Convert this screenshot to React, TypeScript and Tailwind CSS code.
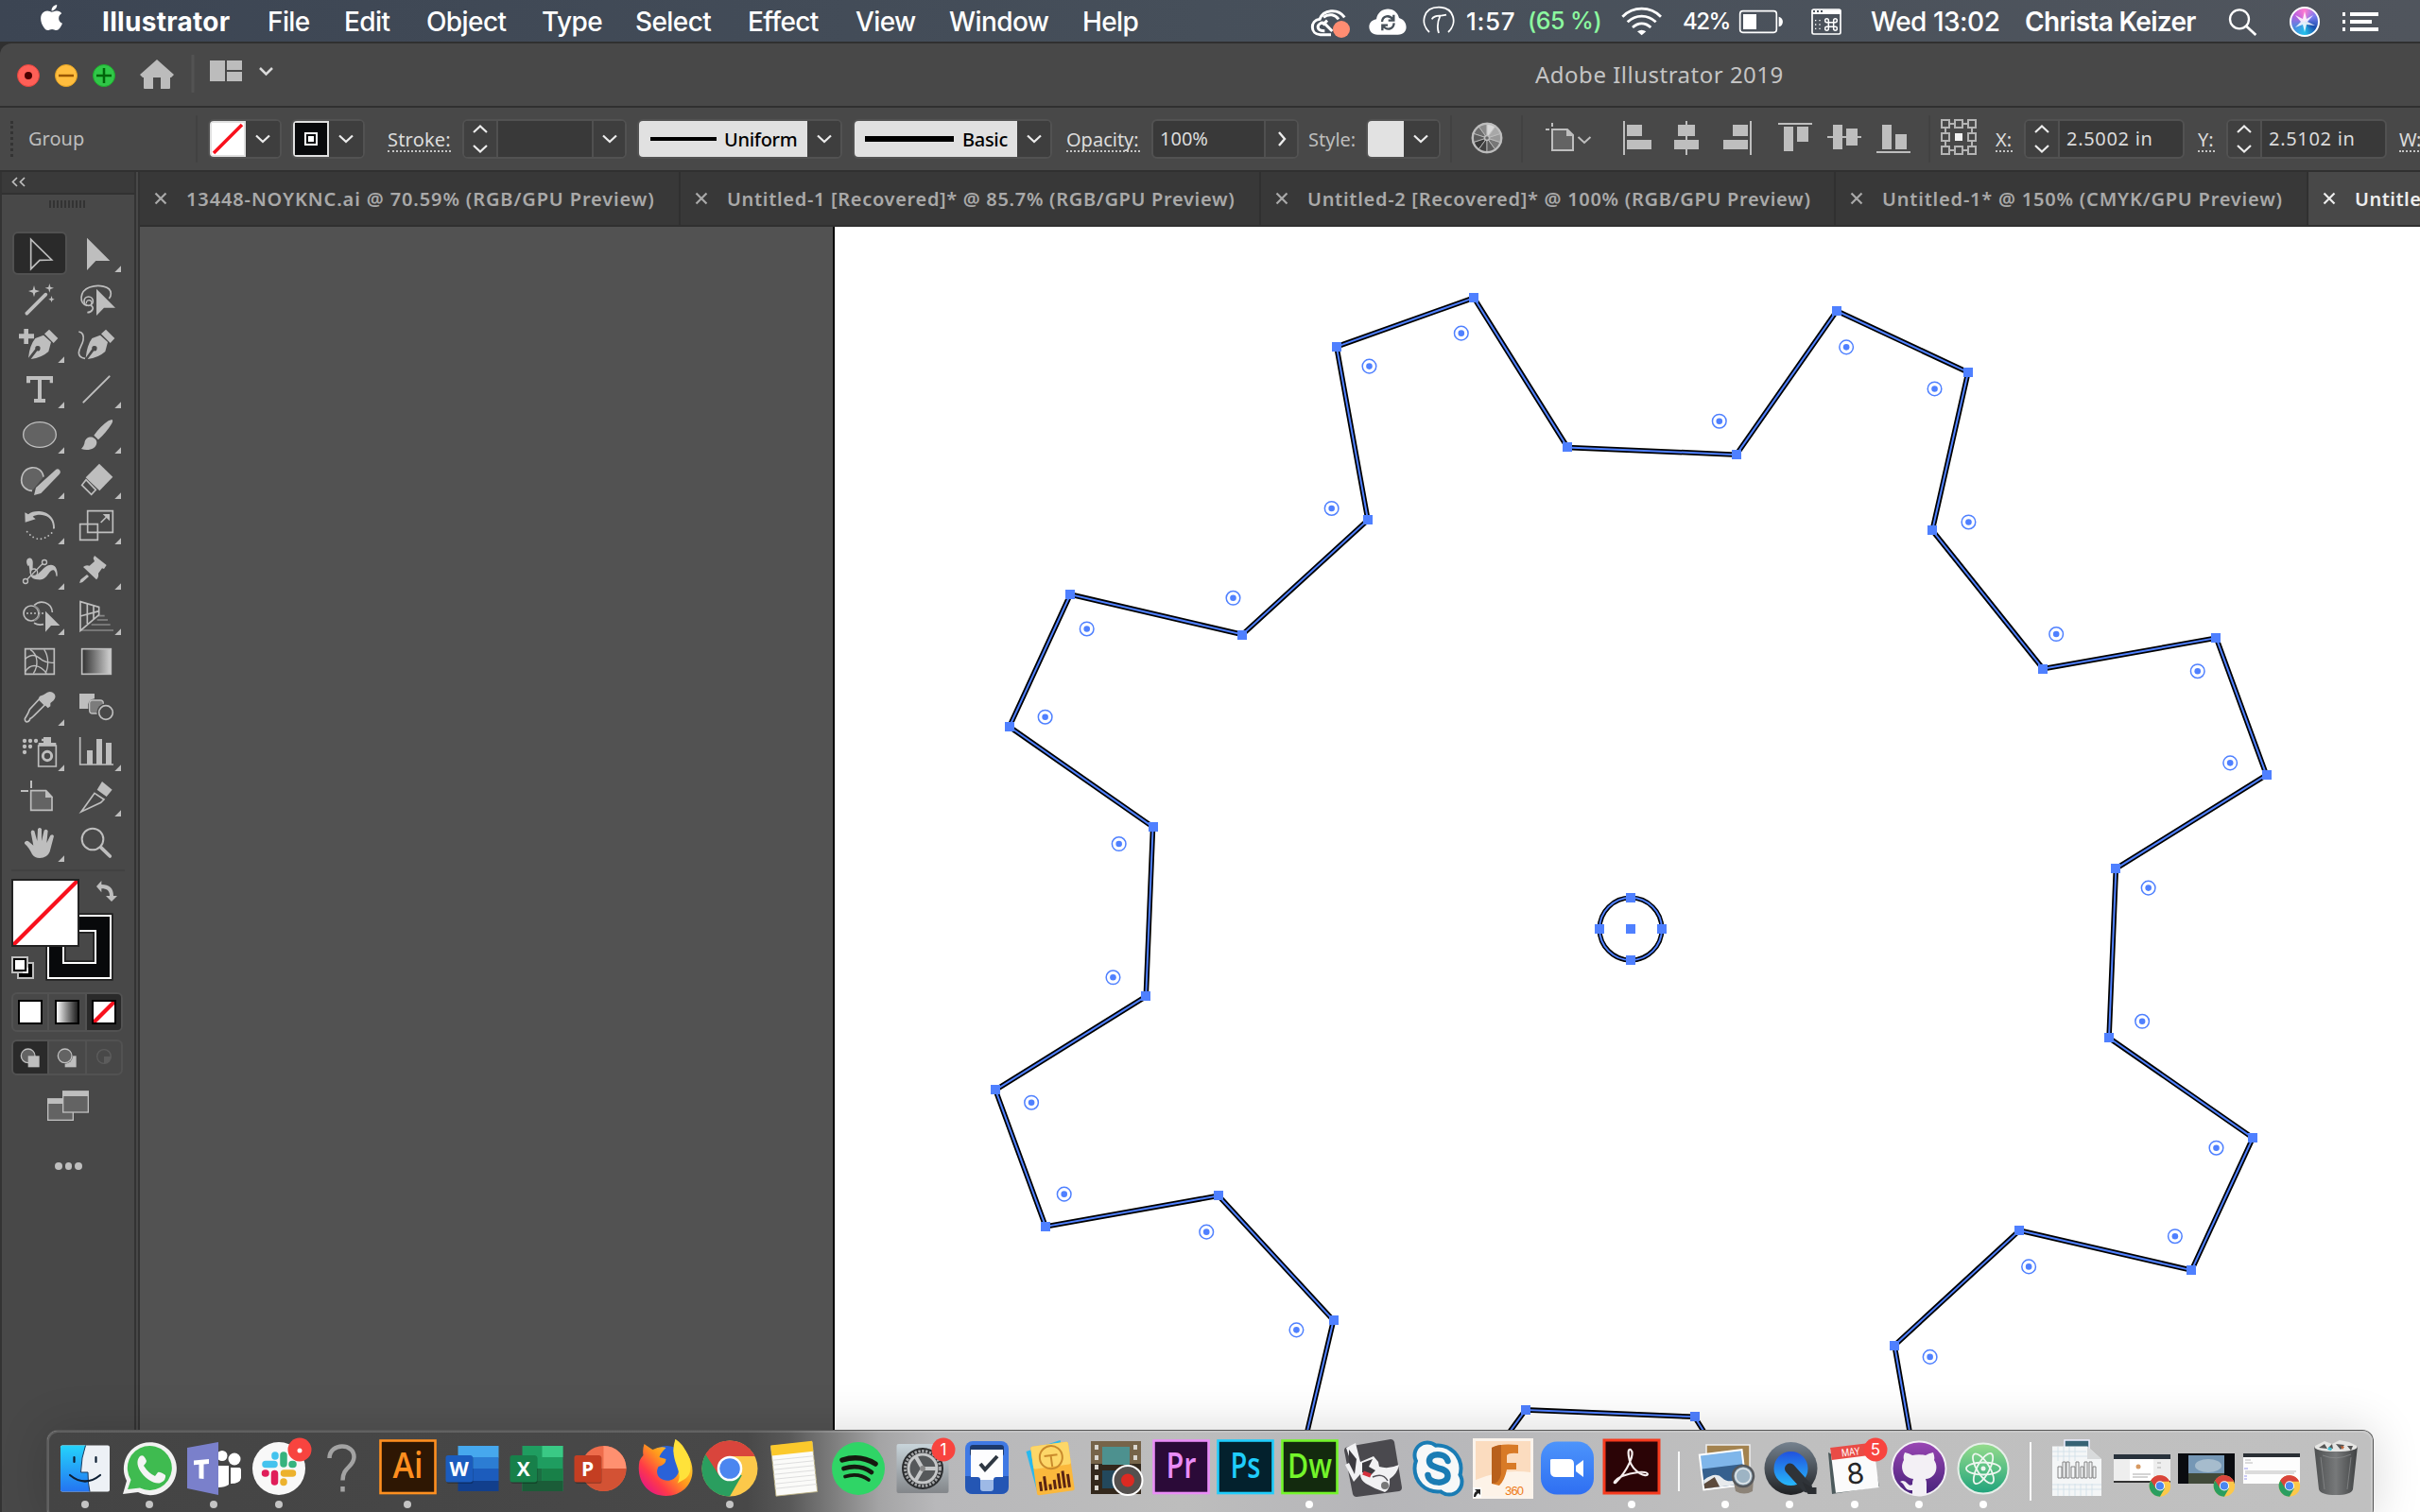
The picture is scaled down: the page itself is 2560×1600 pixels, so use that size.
import React from "react";
import { FaApple } from "react-icons/fa";

const K = "#bebebe";

function T({ children, className = "" }: { children: React.ReactNode; className?: string }) {
  return (
    <div className={"shrink-0 whitespace-nowrap " + className}>
      <span>{children}</span>
    </div>
  );
}

/* ---------- menu bar ---------- */
function MenuBar() {
  return (
    <div className="flex h-[44px] w-full shrink-0 items-center overflow-hidden bg-linear-to-r from-[#3c4553] via-[#464f5a] to-[#50555d] pt-px font-['Inter',sans-serif] text-[28px] font-medium tracking-[-0.6px] text-white">
      <FaApple className="ml-[39px] h-[31px] w-[31px] shrink-0 -translate-y-[4px]" />
      <T className="ml-[38px] w-[175px] font-bold tracking-[0.3px]">Illustrator</T>
      <T className="w-[81px]">File</T>
      <T className="w-[87px]">Edit</T>
      <T className="w-[122px]">Object</T>
      <T className="w-[99px]">Type</T>
      <T className="w-[119px]">Select</T>
      <T className="w-[114px]">Effect</T>
      <T className="w-[99px]">View</T>
      <T className="w-[141px]">Window</T>
      <T className="w-[239px]">Help</T>
      <svg className="h-[44px] w-[48px] shrink-0" viewBox="12 0 144 132">
        <g fill="none" stroke="#fff" strokeWidth="9">
          <path d="M84 107H50C18 107 16 62 48 58C60 28 105 22 127 52" />
          <path d="M88 96L66 74C55 63 38 76 44 88C48 94 56 95 64 95M60 52C78 38 98 44 108 58M58 76L72 62" />
        </g>
        <circle cx="117" cy="90" r="27" fill="#ff8d72" />
      </svg>
      <svg className="ml-[14px] h-[44px] w-[44px] shrink-0" viewBox="198 0 132 132">
        <path d="M232 107C200 107 194 64 228 58C232 18 290 12 300 54C330 62 332 107 296 107Z" fill="#fff" />
        <path d="M246 66C248 46 270 44 280 58M283 44V62H266M284 70C282 92 260 94 250 80M247 94V77H264" fill="none" stroke="#465059" strokeWidth="7" />
      </svg>
      <svg className="ml-[14px] h-[44px] w-[36px] shrink-0" viewBox="372 0 108 132">
        <path d="M396 99C366 72 376 20 426 20C476 20 486 72 456 99M404 58C412 42 430 50 450 44M430 48C422 66 420 84 426 102" fill="none" stroke="#fff" strokeWidth="5.5" />
      </svg>
      <T className="ml-[11px] w-[65px] text-[26px] tracking-[0.7px]">1:57</T>
      <T className="w-[92px] text-[25px] tracking-[-0.5px] text-[#8cf9a0]">(65 %)</T>
      <svg className="ml-[5px] h-[44px] w-[48px] shrink-0" viewBox="1000 0 144 132">
        <g fill="none" stroke="#fff" strokeWidth="8.5">
          <path d="M1010 50C1044 16 1098 16 1132 50" />
          <path d="M1026 67C1052 42 1090 42 1116 67" />
          <path d="M1042 84C1060 68 1082 68 1100 84" />
        </g>
        <path d="M1057 97Q1071 88 1085 97L1071 109Z" fill="#fff" />
      </svg>
      <T className="ml-[19px] w-[58px] text-[24px] tracking-[-1.5px]">42%</T>
      <svg className="h-[44px] w-[50px] shrink-0" viewBox="1374 0 150 132">
        <rect x="1382" y="32" width="116" height="68" rx="9" fill="none" stroke="#fff" strokeWidth="5" />
        <rect x="1392" y="42" width="42" height="48" fill="#fff" />
        <path d="M1505 50C1522 54 1522 78 1505 82Z" fill="#fff" />
      </svg>
      <svg className="ml-[26px] h-[44px] w-[36px] shrink-0" viewBox="72 0 108 132">
        <rect x="81" y="27" width="90" height="78" rx="5" fill="none" stroke="#fff" strokeWidth="5" />
        <path d="M80 28H172V42H80Z" fill="#fff" />
        <path d="M84 33H90M96 33H102M108 33H114" stroke="#4b535c" strokeWidth="6" />
        <path d="M90 62H94M103 62H107M90 75H94M103 75H107M90 88H94M103 88H107" stroke="#fff" strokeWidth="4" />
        <path d="M133 68H149V82H133ZM133 68H127Q122 68 122 61.500Q122 56 127.500 56Q133 56 133 62ZM149 68V62Q149 56 154.500 56Q160 56 160 61.500Q160 68 154 68ZM149 82H155Q160 82 160 88Q160 94 154.500 94Q149 94 149 88ZM133 82V88Q133 94 127.500 94Q122 94 122 88Q122 82 127 82Z" fill="none" stroke="#fff" strokeWidth="4.500" />
      </svg>
      <T className="ml-[29px] w-[163px] tracking-[-0.5px]">Wed 13:02</T>
      <T className="w-[214px] font-semibold tracking-[-0.7px]">Christa Keizer</T>
      <svg className="h-[44px] w-[36px] shrink-0" viewBox="1398 0 108 132">
        <circle cx="1437" cy="58" r="30" fill="none" stroke="#fff" strokeWidth="7" />
        <path d="M1459 80L1489 108" stroke="#fff" strokeWidth="8" />
      </svg>
      <div className="ml-[30px] flex h-[32px] w-[32px] shrink-0 items-center justify-center rounded-full border-2 border-white bg-[conic-gradient(#ff7ad0,#7a7cf0,#1a4fae,#23c0ea,#4a8be0,#b45fe0,#ff7ad0)]">
        <svg className="h-[26px] w-[26px]" viewBox="0 0 26 26">
          <path d="M13 2L15 10L22 6L16 13L24 17L15 16L13 24L11 16L3 19L9 13L3 6L11 10Z" fill="#fff" opacity=".85" />
        </svg>
      </div>
      <svg className="ml-[24px] h-[22px] w-[38px] shrink-0" viewBox="0 0 38 22">
        <path d="M0 3H3M8 3H38M0 11H3M8 11H31M0 19H3M8 19H38" stroke="#fff" strokeWidth="4" />
      </svg>
    </div>
  );
}

/* ---------- title bar ---------- */
function TitleBar() {
  return (
    <div className="flex h-[66px] w-full shrink-0 items-center rounded-tl-[12px] bg-[#484848]">
      <svg className="ml-[16px] h-[66px] w-[280px] shrink-0" viewBox="16 46 280 66">
        <circle cx="30" cy="80" r="11.500" fill="#ff5f57" stroke="#e0443e" />
        <circle cx="30" cy="80" r="4" fill="#4c0000" />
        <circle cx="70" cy="80" r="11.500" fill="#ffbd3e" stroke="#dfa023" />
        <path d="M62 80H78" stroke="#995700" strokeWidth="2.500" />
        <circle cx="110" cy="80" r="11.500" fill="#30c748" stroke="#1dad2b" />
        <path d="M102 80H118M110 72V88" stroke="#00650a" strokeWidth="2.500" />
        <path d="M166 63L184 79L181 82H180V93Q180 94 179 94H170V82H162V94H153Q152 94 152 93V82H151L148 79Z" fill="#bcbcbc" />
        <path d="M204 58V98" stroke="#535353" strokeWidth="3" />
        <path d="M222 64H238V86H222ZM240 64H256V74H240ZM240 76H256V86H240Z" fill="#bcbcbc" />
        <path d="M275 72L281.500 78.500L288 72" fill="none" stroke="#dadada" strokeWidth="2.500" />
      </svg>
      <T className="ml-[1328px] text-[24px] tracking-[0.5px] text-[#c4c4c4]">Adobe Illustrator 2019</T>
    </div>
  );
}

/* ---------- control bar ---------- */
function Chev({ w = "w-[36px]" }: { w?: string }) {
  return (
    <div className={"flex h-full shrink-0 items-center justify-center bg-[#3e3e3e] " + w}>
      <svg className="h-[10px] w-[16px]" viewBox="0 0 16 10">
        <path d="M1 1.500L8 8L15 1.500" fill="none" stroke="#ececec" strokeWidth="2.200" />
      </svg>
    </div>
  );
}
function Stepper() {
  return (
    <div className="flex h-full w-[36px] shrink-0 items-center justify-center border-r-2 border-[#505050] bg-[#404040]">
      <svg className="h-[30px] w-[16px]" viewBox="0 0 16 30">
        <path d="M1 8L8 1.500L15 8M1 22L8 28.500L15 22" fill="none" stroke="#ececec" strokeWidth="2.200" />
      </svg>
    </div>
  );
}
const BOX = "flex h-[42px] shrink-0 items-center overflow-hidden rounded-[6px] border-2 border-[#525252] bg-[#393939] ";
function Sep({ className = "" }: { className?: string }) {
  return <div className={"h-[50px] w-[2px] shrink-0 bg-[#424242] " + className} />;
}
const DOT = "relative pt-[2px] after:absolute after:left-0 after:top-[28px] after:h-0 after:w-full after:border-b-2 after:border-dotted after:border-[#c4c4c4] ";

function ControlBar() {
  return (
    <div className="flex h-[66px] w-full shrink-0 items-center overflow-hidden bg-[#484848] text-[20px] text-[#dcdcdc]">
      <div className="ml-[11px] h-[38px] w-0 shrink-0 border-l-[3px] border-dotted border-[#333]" />
      <T className="ml-[16px] w-[177px] text-[#bdbdbd]">Group</T>
      <Sep />
      <div className={BOX + "ml-[11px] w-[78px]"}>
        <svg className="h-[38px] w-[38px] shrink-0" viewBox="0 0 38 38">
          <rect width="38" height="38" fill="#e0e0e0" />
          <rect x="2" y="2" width="34" height="34" fill="#fff" />
          <path d="M4 34L34 4" stroke="#f8101c" strokeWidth="3.500" />
        </svg>
        <Chev />
      </div>
      <div className={BOX + "ml-[10px] w-[78px]"}>
        <svg className="h-[38px] w-[38px] shrink-0" viewBox="0 0 38 38">
          <rect width="38" height="38" fill="#e0e0e0" />
          <rect x="2" y="2" width="34" height="34" fill="#08090b" />
          <rect x="12" y="12" width="14" height="14" fill="#fff" />
          <rect x="15" y="15" width="8" height="8" fill="#fff" stroke="#08090b" strokeWidth="2" />
        </svg>
        <Chev />
      </div>
      <div className="ml-[24px] w-[79px] shrink-0"><T className={DOT + "w-[67px] tracking-[0.2px]"}>Stroke:</T></div>
      <div className={BOX + "w-[174px]"}>
        <Stepper />
        <div className="h-full w-[101px] shrink-0 border-r-2 border-[#505050]" />
        <Chev w="w-[33px]" />
      </div>
      <div className={BOX + "ml-[11px] w-[217px] text-black"}>
        <div className="flex h-full w-[178px] shrink-0 items-center bg-[#e1e1e1]">
          <div className="ml-[12px] h-[4px] w-[70px] shrink-0 bg-black" />
          <T className="ml-[8px] pt-[2px] font-medium tracking-[-0.3px]">Uniform</T>
        </div>
        <Chev />
      </div>
      <div className={BOX + "ml-[11px] w-[211px] text-black"}>
        <div className="flex h-full w-[172px] shrink-0 items-center bg-[#e1e1e1]">
          <div className="ml-[11px] h-[6px] w-[94px] shrink-0 bg-black" />
          <T className="ml-[9px] pt-[2px] font-medium tracking-[-0.3px]">Basic</T>
        </div>
        <Chev />
      </div>
      <div className="ml-[15px] w-[90px] shrink-0"><T className={DOT + "w-[78px]"}>Opacity:</T></div>
      <div className={BOX + "w-[156px]"}>
        <T className="w-[117px] pl-[7px]">100%</T>
        <div className="flex h-full w-[36px] items-center justify-center border-l-2 border-[#505050] bg-[#404040]">
          <svg className="h-[16px] w-[10px]" viewBox="0 0 10 16">
            <path d="M2 1L8 8L2 15" fill="none" stroke="#ececec" strokeWidth="2.400" />
          </svg>
        </div>
      </div>
      <T className="ml-[10px] w-[61px] pt-[2px] text-[#bdbdbd]">Style:</T>
      <div className={BOX + "w-[79px]"}>
        <div className="h-full w-[38px] shrink-0 bg-[#e2e2e2]" />
        <Chev />
      </div>
      <Sep className="ml-[10px]" />
      <svg className="h-[66px] w-[73px] shrink-0" viewBox="1537 114 73 66">
        {["#8a8a8a", "#6c6c6c", "#5a5a5a", "#383838", "#424242", "#5c5c5c", "#777", "#999", "#a8a8a8", "#d8d8d8"].map((c, i) => (
          <path key={i} d="M1574 146V130A16 16 0 0 0 1564.600 133.060Z" fill={c} transform={`rotate(${-i * 36} 1574 146)`} stroke="#bebebe" strokeWidth="0.800" />
        ))}
        <circle cx="1574" cy="146" r="15" fill="none" stroke={K} strokeWidth="2" />
        <circle cx="1574" cy="146" r="2.500" fill="#666" stroke={K} strokeWidth="1.500" />
      </svg>
      <Sep />
      <svg className="h-[66px] w-[429px] shrink-0" viewBox="1612 114 429 66">
        <path d="M1643 137H1659L1665 143V159H1643Z" fill="#636363" stroke={K} strokeWidth="2" />
        <path d="M1658 136L1666 144H1658ZM1642 130H1644V134H1642ZM1636 136H1640V138H1636Z" fill={K} />
        <path d="M1670.500 145L1677 151L1683.500 145" fill="none" stroke={K} strokeWidth="2" />
        <g fill={K}>
          <path d="M1718 128h2v36h-2zM1722 132h16v12h-16zM1722 148h26v10h-26z" />
          <path d="M1784 128h2v36h-2zM1776 132h18v12h-18zM1772 148h26v10h-26z" />
          <path d="M1852 128h2v36h-2zM1834 132h16v12h-16zM1824 148h26v10h-26z" />
          <path d="M1882 130h36v2h-36zM1888 134h10v26h-10zM1902 134h12v16h-12z" />
          <path d="M1934 144h36v2h-36zM1940 132h10v26h-10zM1954 136h12v18h-12z" />
          <path d="M1986 160h36v2h-36zM1992 132h10v26h-10zM2006 142h12v16h-12z" />
        </g>
      </svg>
      <Sep />
      <svg className="h-[66px] w-[57px] shrink-0" viewBox="2043 114 57 66">
        <g fill="none" stroke="#b4b4b4" strokeWidth="2">
          {[0, 14, 28].map((y) => [0, 14, 28].map((x) =>
            x === 14 && y === 14 ? null : <rect key={x + "-" + y} x={2055 + x} y={127 + y} width="8" height="8" />
          ))}
          <path d="M2063 131H2069M2077 131H2083M2063 159H2069M2077 159H2083M2059 135V141M2059 149V155M2087 135V141M2087 149V155" />
        </g>
        <rect x="2069" y="141" width="8" height="8" fill="#f2f2f2" />
      </svg>
      <div className="ml-[12px] w-[30px] shrink-0"><T className={DOT + "w-[18px]"}>X:</T></div>
      <div className={BOX + "w-[170px]"}>
        <Stepper />
        <T className="ml-[7px] tracking-[0.7px]">2.5002 in</T>
      </div>
      <div className="ml-[14px] w-[30px] shrink-0"><T className={DOT + "w-[18px]"}>Y:</T></div>
      <div className={BOX + "w-[170px]"}>
        <Stepper />
        <T className="ml-[7px] tracking-[0.7px]">2.5102 in</T>
      </div>
      <T className={DOT + "ml-[13px] w-[40px] -tracking-[0.5px]"}>W:</T>
    </div>
  );
}

/* ---------- tabs ---------- */
function Tab({ label, className, active }: { label: string; className: string; active?: boolean }) {
  return (
    <div className={"flex h-full shrink-0 items-center overflow-hidden pl-[15px] " + (active ? "bg-[#484848] text-[#ededed] " : "border-r-2 border-[#303030] bg-[#383838] text-[#a9a9a9] ") + className}>
      <svg className="mr-[20px] h-[14px] w-[14px] shrink-0" viewBox="0 0 14 14">
        <path d="M1.500 1.500L12.500 12.500M12.500 1.500L1.500 12.500" stroke="currentColor" strokeWidth="2.200" />
      </svg>
      <T className="pt-[2px]">{label}</T>
    </div>
  );
}
function Tabs() {
  return (
    <div className="flex h-[56px] w-full shrink-0 overflow-hidden text-[20px] font-semibold">
      <Tab label="13448-NOYKNC.ai @ 70.59% (RGB/GPU Preview)" className="w-[572px] tracking-[0.880px]" />
      <Tab label="Untitled-1 [Recovered]* @ 85.7% (RGB/GPU Preview)" className="w-[614px] tracking-[0.680px]" />
      <Tab label="Untitled-2 [Recovered]* @ 100% (RGB/GPU Preview)" className="w-[608px] tracking-[0.710px]" />
      <Tab label="Untitled-1* @ 150% (CMYK/GPU Preview)" className="w-[500px] tracking-[0.800px]" />
      <Tab label="Untitled-2* @ 100%" className="w-[118px] tracking-[0.500px]" active />
    </div>
  );
}

/* ---------- tool panel ---------- */
const L = 36;
const R = 216;
const TRI = (x: number, y: number) => <path d={`M${x} ${y}V${y - 20}L${x - 20} ${y}Z`} fill={K} />;
const SW = { fill: "none", stroke: K, strokeWidth: 5 } as const;

/* Each tool is drawn on a 180x144 cell: [left, top, drawing, has flyout]. */
const TOOLS: [number, number, React.ReactNode, boolean][] = [
  [L, 192, <path d="M98 220V314L126 286L164 285Z" fill="#2a2a2a" stroke={K} strokeWidth="5" />, false],
  [R, 192, <path d="M276 215V318L304 288H349Z" fill={K} />, true],
  [L, 336, <><path d="M85 455L145 395" stroke={K} strokeWidth="11" strokeLinecap="round" /><path d="M108 366L112 380L126 384L112 389L108 403L104 389L90 384L104 380ZM157 360L160 371L171 374L160 378L157 389L154 378L143 374L154 371ZM164 399L166 407L173 410L166 413L164 420L161 413L154 410L161 407Z" fill={K} /></>, false],
  [R, 336, <><path d="M276 430C250 424 252 384 284 372C312 362 352 368 352 392C352 400 350 404 346 408M288 430C302 436 292 452 277 452" {...SW} /><circle cx="281" cy="416" r="14" {...SW} /><path d="M274 424C272 406 300 412 288 428" {...SW} strokeWidth="4" /><path d="M306 377V462L330 437H366Z" fill={K} /></>, false],
  [L, 480, <><path d="M60 520H76V504H90V520H108V535H90V552H76V535H60Z" fill={K} /><path d="M90 596Q94 556 112 534L138 524L162 546L154 576Q132 596 98 600L118 574A8 8 0 1 0 112 568ZM156 506L184 534L170 549L141 520Z" fill={K} /></>, true],
  [R, 480, <><path d="M250 513Q268 516 264 540C262 554 250 566 250 580Q250 596 270 598" {...SW} /><path d="M272 596Q276 556 292 534L318 524L342 546L334 576Q312 596 278 600L298 574A8 8 0 1 0 292 568ZM336 506L364 534L350 549L321 520Z" fill={K} /></>, false],
  [L, 624, <path d="M84 654H168V676H158V666H132V726H144V738H108V726H120V666H96V676H84Z" fill={K} />, true],
  [R, 624, <path d="M265 737L347 655" stroke={K} strokeWidth="6" strokeLinecap="round" />, true],
  [L, 768, <ellipse cx="126" cy="840" rx="52" ry="40" fill="#636363" stroke={K} strokeWidth="4" />, true],
  [R, 768, <path d="M355 792Q360 794 355 804Q340 830 312 856L298 842Q320 812 344 796ZM294 848Q308 854 307 866C304 886 280 892 258 885Q266 878 268 868C270 850 282 846 294 848Z" fill={K} />, true],
  [L, 912, <><path d="M138 974C132 932 70 934 68 984C68 1004 84 1018 102 1018" fill="#636363" stroke={K} strokeWidth="5" /><path d="M108 1032L114 1008L178 950Q184 946 190 953Q194 960 188 966L130 1026Z" fill={K} /></>, true],
  [R, 912, <><path d="M315 932L358 974L316 1018L272 976Z" fill={K} /><path d="M273 983L304 1015L290 1030L260 1000Z" {...SW} /></>, true],
  [L, 1056, <><path d="M79 1087L90 1093C112 1074 176 1080 174 1138C168 1140 168 1140 168 1130C166 1094 124 1088 104 1100L113 1108L80 1118Z" fill={K} /><path d="M86 1148Q124 1194 168 1148" fill="none" stroke={K} strokeWidth="5.500" strokeDasharray="0 13" strokeLinecap="round" /></>, true],
  [R, 1056, <><path d="M278 1082H358V1150H278ZM254 1124H310V1174H254Z" {...SW} /><path d="M320 1119L338 1101" {...SW} /><path d="M326 1092H348V1114Z" fill={K} /></>, true],
  [L, 0, <><path d="M88 56C80 40 86 28 98 32C110 38 100 60 106 78C114 98 130 70 144 60C162 46 184 52 182 88Q180 92 178 88C176 66 166 66 158 76C146 92 142 102 120 100C100 98 96 92 94 70Q92 50 90 56Z" fill={K} /><path d="M87 98L136 49" stroke={K} strokeWidth="4" /><g fill="#484848" stroke={K} strokeWidth="4"><circle cx="81" cy="105" r="7.500" /><circle cx="141" cy="45" r="7.500" /><circle cx="108" cy="77" r="11" /></g><path d="M102 83L116 69" stroke={K} strokeWidth="4" /></>, true],
  [R, 0, <path d="M300 24L338 54L330 66L324 64L312 80Q314 92 306 100L264 60Q272 52 284 56L300 42L296 32ZM276 84L282 90L262 108L252 111L256 100Z" fill={K} />, true],
  [L, 144, <><path d="M108 182C128 162 164 172 166 204M108 238Q122 246 138 242" {...SW} /><circle cx="99" cy="207" r="24" {...SW} /><path d="M108 184A24 24 0 0 1 108 230" fill="none" stroke="#8a8a8a" strokeWidth="5" /><path d="M84 207H140" stroke={K} strokeWidth="5" strokeDasharray="6 6" /><path d="M144 200V266L162 246H190Z" fill={K} /></>, true],
  [R, 144, <><path d="M310 215H332M308 228H342M290 243H350M256 261H360" stroke="#868686" strokeWidth="5" /><path d="M255 170L314 187V212L255 262ZM277 178V240M297 183V226M255 216L314 200" {...SW} /></>, true],
  [L, 288, <><path d="M80 320H172V400H80Z" {...SW} /><path d="M80 352C104 330 120 344 134 356Q150 366 172 364M80 392C100 362 128 372 148 398M96 322C122 338 122 374 106 398M140 322C156 344 154 380 144 398" {...SW} strokeWidth="4" /></>, false],
  [R, 288, <><defs><linearGradient id="gt"><stop offset="0" stopColor="#303030" /><stop offset="1" stopColor="#d2d2d2" /></linearGradient></defs><rect x="260" y="320" width="92" height="80" fill="url(#gt)" stroke={K} strokeWidth="5" /></>, false],
  [L, 432, <><path d="M124 480L142 498L110 530Q100 540 96 541C92 556 78 554 79 542C80 538 88 530 94 512Z" {...SW} /><path d="M126 470L138 466L150 458Q162 452 172 462Q180 472 170 484L160 492V502L152 508L122 478Z" fill={K} /></>, true],
  [R, 432, <><path d="M252 462H300V478Q282 480 280 496V510H252Z" fill={K} /><rect x="284" y="483" width="44" height="42" rx="10" fill="#7c7c7c" stroke={K} strokeWidth="4" /><circle cx="336" cy="522" r="29" fill="#484848" /><circle cx="336" cy="522" r="22" {...SW} /></>, false],
  [L, 576, <><g fill={K}>{[[78, 612], [96, 612], [114, 612], [78, 630], [96, 630], [78, 648]].map(([x, y]) => <circle key={x + "_" + y} cx={x} cy={y} r="6.500" />)}<path d="M132 605H138V600H162V618H178V628H122V618H138V613H132Z" /></g><path d="M122 627H178V693H122Z" {...SW} /><circle cx="150" cy="660" r="14" fill="none" stroke={K} strokeWidth="9" /></>, true],
  [R, 576, <><path d="M254 600V687H360" {...SW} /><path d="M276 687V642H294V687ZM306 687V606H324V687ZM336 687V618H354V687Z" fill={K} /></>, true],
  [L, 720, <><path d="M98 770H146L165 790V832H98Z" fill="#636363" stroke={K} strokeWidth="5" /><path d="M144 768L168 792H144ZM96 738H102V762H96ZM66 768H90V774H66Z" fill={K} /></>, false],
  [R, 720, <><path d="M300 778L330 798L320 808L258 837L290 792Z" {...SW} /><path d="M324 741L356 767L338 789L308 767Z" fill={K} /></>, true],
  [L, 864, <path d="M78 934Q84 926 92 932L106 944L98 902Q100 892 109 898L118 930L120 892Q126 884 132 892V930L140 896Q148 890 152 898L148 936L160 912Q168 906 171 914L158 964Q150 984 126 984Q110 984 102 972Q92 950 78 938Z" fill={K} />, true],
  [R, 864, <><circle cx="294" cy="924" r="34" fill="none" stroke={K} strokeWidth="6" /><path d="M320 950L349 978" stroke={K} strokeWidth="11" strokeLinecap="round" /></>, false],
];

function ToolPanel() {
  return (
    <div className="flex h-[1418px] w-[148px] shrink-0 border-l-2 border-[#333] bg-[#484848]">
      <div className="flex w-[140px] flex-col">
        <div className="flex h-[24px] items-center border-b-2 border-[#313131] bg-[#3a3a3a] pl-[10px]">
          <svg className="h-[12px] w-[16px]" viewBox="0 0 16 12">
            <path d="M6 1L1.500 5.500L6 10M14 1L9.500 5.500L14 10" fill="none" stroke={K} strokeWidth="1.700" />
          </svg>
        </div>
        <div className="ml-[50px] mt-[6px] h-[8px] w-[38px] bg-[repeating-linear-gradient(90deg,#333_0_2px,#484848_2px_4px)]" />
        <div className="ml-[10px] mt-[24px] grid w-[120px] grid-cols-2 self-start">
          {TOOLS.map(([x, y, icon, fly], i) => (
            <div key={i} className="relative h-[48px] w-[60px]">
              {i === 0 && <div className="absolute left-px top-px h-[46px] w-[58px] rounded-[6px] border-2 border-[#515151] bg-[#2a2a2a]" />}
              <svg className="relative h-[48px] w-[60px]" viewBox={`${x} ${y} 180 144`}>
                {icon}
                {fly && TRI(x + 168, y + 132)}
              </svg>
            </div>
          ))}
        </div>
        <svg className="ml-[4px] h-[134px] w-[132px]" viewBox="18 48 396 402">
          <path d="M36 63H396" stroke="#414141" strokeWidth="5" />
          <rect x="145" y="199" width="214" height="214" fill="#1f1f1f" />
          <rect x="150" y="204" width="204" height="204" fill="#fff" />
          <rect x="156" y="210" width="192" height="192" fill="#08090b" />
          <rect x="198" y="252" width="108" height="108" fill="#fff" />
          <rect x="204" y="258" width="96" height="96" fill="#1f1f1f" />
          <rect x="209" y="263" width="86" height="86" fill="#484848" />
          <rect x="36" y="90" width="216" height="216" fill="#232323" />
          <rect x="42" y="96" width="204" height="204" fill="#fff" />
          <path d="M42 300V291L237 96H246V105L51 300Z" fill="#f8101c" />
          <path d="M306 114L322 96V108C348 108 360 120 360 144H372L354 162L336 144H348C348 128 340 121 322 121V133Z" fill={K} />
          <rect x="54" y="354" width="54" height="54" fill={K} />
          <rect x="60" y="360" width="42" height="42" fill="#000" />
          <rect x="36" y="336" width="54" height="54" fill={K} />
          <rect x="42" y="342" width="42" height="42" fill="#000" />
          <rect x="48" y="348" width="30" height="30" fill="#fff" />
          <path d="M72 387H88V372" fill="none" stroke="#fff" strokeWidth="4" />
        </svg>
        <div className="ml-[10px] flex h-[42px] w-[118px] overflow-hidden rounded-[6px] border-2 border-[#525252]">
          <div className="flex w-[38px] shrink-0 items-center justify-center border-r-2 border-[#525252]">
            <div className="h-[26px] w-[26px] border-2 border-black bg-white" />
          </div>
          <div className="flex w-[40px] shrink-0 items-center justify-center border-r-2 border-[#525252]">
            <div className="h-[26px] w-[26px] border-2 border-black bg-linear-to-r from-white to-[#222]" />
          </div>
          <div className="flex w-[36px] shrink-0 items-center justify-center bg-[#2a2a2a]">
            <svg className="h-[26px] w-[26px]" viewBox="0 0 26 26">
              <rect x="1" y="1" width="24" height="24" fill="#fff" stroke="#000" strokeWidth="2" />
              <path d="M2 24V21L21 2H24V5L5 24Z" fill="#f8101c" />
            </svg>
          </div>
        </div>
        <div className="ml-[10px] mt-[8px] flex h-[38px] w-[118px] overflow-hidden rounded-[6px] border-2 border-[#525252]">
          <div className="flex w-[38px] shrink-0 items-center justify-center border-r-2 border-[#525252] bg-[#2a2a2a]">
            <svg className="h-[22px] w-[22px]" viewBox="64 626 66 66">
              <circle cx="90" cy="654" r="22" fill="#636363" stroke={K} strokeWidth="4" /><rect x="90" y="654" width="36" height="36" fill={K} />
            </svg>
          </div>
          <div className="flex w-[40px] shrink-0 items-center justify-center border-r-2 border-[#525252]">
            <svg className="h-[22px] w-[22px]" viewBox="184 626 66 66">
              <rect x="210" y="654" width="36" height="36" fill={K} /><circle cx="210" cy="654" r="25" fill="#484848" /><circle cx="210" cy="654" r="22" fill="#636363" stroke={K} strokeWidth="4" />
            </svg>
          </div>
          <div className="flex w-[36px] shrink-0 items-center justify-center">
            <svg className="h-[22px] w-[22px]" viewBox="297 624 66 66">
              <circle cx="330" cy="654" r="22" fill="none" stroke="#5c5c5c" strokeWidth="4" /><path d="M330 654H352C352 668 342 676 330 676Z" fill="#5c5c5c" />
            </svg>
          </div>
        </div>
        <svg className="ml-[46px] mt-[14px] h-[36px] w-[48px]" viewBox="144 756 144 108">
          <rect x="152" y="789" width="80" height="67" fill="#636363" stroke={K} strokeWidth="4" />
          <rect x="150" y="787" width="84" height="17" fill={K} />
          <rect x="200" y="765" width="80" height="66" fill="#636363" stroke={K} strokeWidth="4" />
          <rect x="198" y="763" width="84" height="17" fill={K} />
        </svg>
        <div className="ml-[56px] mt-[42px] flex gap-[3px]">
          <div className="h-[7.500px] w-[7.500px] rounded-full bg-[#bebebe]" />
          <div className="h-[7.500px] w-[7.500px] rounded-full bg-[#bebebe]" />
          <div className="h-[7.500px] w-[7.500px] rounded-full bg-[#bebebe]" />
        </div>
      </div>
      <div className="w-[6px] border-x-2 border-[#333] bg-[#484848]" />
    </div>
  );
}

/* ---------- artboard ---------- */
const S = 1.63265;
const GEAR: [number, number][] = [
  [866, 224.7], [955, 193], [1015.7, 290], [1125, 294.7], [1190.1, 201.5], [1275.2, 241.3], [1252, 343.8], [1323.8, 433.5],
  [1436, 413.5], [1468.500, 502.3], [1371, 563], [1366.500, 672.7], [1459.7, 737.500], [1420, 823.3], [1308.500, 797.500], [1227.500, 872],
  [1247, 983], [1158, 1014], [1098, 918.3], [988.500, 913.800], [923, 1004], [838, 966], [864, 855.800], [789.500, 775],
  [677.500, 795], [645, 706.500], [742.500, 645.800], [747, 536], [654, 471], [693.500, 385.300], [805, 411.300], [886.300, 337],
];
const WIDGETS: [number, number][] = [
  [946.800, 216], [887.200, 237.400], [1196.3, 225], [1253.500, 252], [1114, 273], [1275.500, 338.400], [1332.3, 411], [1423.900, 435],
  [1445, 494.500], [1392, 575.500], [1388, 662], [1436, 744], [1409.3, 801.3], [1314.500, 821], [1250.500, 879.500], [862.800, 329.500],
  [799, 387.600], [704.200, 407.600], [677.200, 464.700], [725, 547], [721.2, 633.500], [668.3, 714.600], [689.500, 774], [781.700, 798.500], [840, 862],
];
const B = "#4f80ff";
function Node({ x, y }: { x: number; y: number }) {
  return <rect x={Math.round(x) - 5} y={Math.round(y) - 5} width="10" height="10" fill={B} />;
}
function Artboard() {
  const pts = GEAR.map(([x, y]) => `${x * S},${y * S}`).join(" ");
  return (
    <div className="flex h-[1360px] w-full overflow-hidden">
      <div className="w-[733px] shrink-0 bg-[#525252]" />
      <div className="w-[1679px] border-l-2 border-black bg-white">
        <svg className="h-[1360px] w-[1677px]" viewBox="883 240 1677 1360">
          <polygon points={pts} fill="none" stroke="#000" strokeWidth="5.500" />
          <polygon points={pts} fill="none" stroke={B} strokeWidth="2" />
          <circle cx="1725" cy="983" r="33" fill="none" stroke="#000" strokeWidth="5" />
          <circle cx="1725" cy="983" r="33" fill="none" stroke={B} strokeWidth="2" />
          {GEAR.map(([x, y], i) => <Node key={i} x={x * S} y={y * S} />)}
          <Node x={1725} y={983} /><Node x={1725} y={950} /><Node x={1725} y={1016} /><Node x={1692} y={983} /><Node x={1758} y={983} />
          {WIDGETS.map(([x, y], i) => (
            <g key={i}>
              <circle cx={x * S} cy={y * S} r="7.300" fill="none" stroke={B} strokeWidth="1.500" />
              <circle cx={x * S} cy={y * S} r="3.300" fill={B} />
            </g>
          ))}
        </svg>
      </div>
    </div>
  );
}

/* ---------- dock ---------- */
const Adobe = ({ t, c, bg }: { t: string; c: string; bg: string }) => (
  <>
    <rect x="5.500" y="4.500" width="58" height="55.500" fill={bg} stroke={c} strokeWidth="2.600" />
    <text x="34.500" y="44" textAnchor="middle" fontFamily="Open Sans, sans-serif" fontWeight="600" fontSize={t === "Dw" ? 36 : 38} textLength={t === "Dw" ? 47 : 32} lengthAdjust="spacingAndGlyphs" fill={c}>{t}</text>
  </>
);
const Badge = ({ x, t }: { x: number; t: string }) => (
  <>
    <circle cx={x} cy="14" r="12.500" fill="#f8443f" />
    <text x={x} y="20" textAnchor="middle" fontFamily="Inter, sans-serif" fontSize="17" fill="#fff">{t}</text>
  </>
);
const Chrome = () => (
  <>
    <circle cx="34" cy="34" r="29.500" fill="#fcc84a" />
    <path d="M34 34L8.500 19A29.500 29.500 0 0 0 34 63.500L46.800 41.300Z" fill="#2a9e5f" />
    <path d="M34 34L8.500 19A29.500 29.500 0 0 1 60.500 21H34Z" fill="#d9453c" />
    <path d="M8.500 19.200L22.500 41L34 21H60A29.500 29.500 0 0 0 8.500 19.200Z" fill="#d9453c" />
    <circle cx="34" cy="34" r="13.300" fill="#fff" /><circle cx="34" cy="34" r="10.800" fill="#4b86f0" />
  </>
);
const Office = ({ t, c, kids }: { t: string; c: string; kids: React.ReactNode }) => (
  <g transform="translate(2.500 0)">
    {kids}
    <rect x="5" y="21" width="28" height="29" rx="2" fill="#000" opacity=".25" />
    <rect x="4" y="20" width="28.500" height="28.500" rx="2.500" fill={c} />
    <text x="18.200" y="42" textAnchor="middle" fontFamily="Open Sans, sans-serif" fontWeight="700" fontSize="21" fill="#fff">{t}</text>
  </g>
);
const Win = ({ kids }: { kids: React.ReactNode }) => (
  <>
    {kids}
    <g transform="translate(40 39.500) scale(.38)"><Chrome /></g>
  </>
);

/* Icon drawings on a 68x68 cell: [drawing, is running]. */
const DOCK_A: [React.ReactNode, boolean][] = [
  [<><defs><linearGradient id="fi" x2="0" y2="1"><stop stopColor="#25d3fb" /><stop offset="1" stopColor="#2474f1" /></linearGradient></defs><rect x="8" y="9.500" width="52" height="49" rx="2" fill="#edf1f6" /><path d="M10 9.500H35Q30 22 29.500 38H37Q37 50 39 58.500H10Q8 58.500 8 56.500V11.500Q8 9.500 10 9.500Z" fill="url(#fi)" /><path d="M34.500 9.500Q30 22 29.500 38H37Q37 50 39 58.500" fill="none" stroke="#1c3a5e" strokeWidth="1" /><path d="M22.500 22V27M45.500 22V27M18 41Q34 54 50 41" fill="none" stroke="#0d1f33" strokeWidth="2.200" strokeLinecap="round" /></>, true],
  [<><path d="M6 61L10 47A28 28 0 1 1 22 59Z" fill="#f2f2f2" /><path d="M11 56L14.500 46A23.500 23.500 0 1 1 24 54.500Z" fill="#3fbb50" /><path d="M24 21Q28 18 31 26Q31 28 28 31Q33 39 40 42L43 38Q45 37 51 41Q52 46 46 49C36 53 14 32 24 21Z" fill="#f4f4f4" /></>, true],
  [<g transform="translate(5 0)"><g fill="#fff"><circle cx="38" cy="20.500" r="5.500" /><circle cx="51" cy="24" r="6.500" /><path d="M34 31H45V51Q41 54 34 54ZM47 33H56Q58 33 58 36V44Q57 50 47 50Z" /></g><path d="M1 12L34 6V62L1 55Z" fill="#7a80cb" /><path d="M8 25.500L24 24V29L18.500 29.400V45L13.500 44.500V29.800L8 30.200Z" fill="#fff" /></g>, true],
  [<><circle cx="34" cy="34" r="28" fill="#f8f8f8" /><g strokeWidth="7.500" strokeLinecap="round"><path d="M20 29.500H29M30 20V21" stroke="#44c3ee" /><path d="M39 20V29M48 29.500H49" stroke="#36b37e" /><path d="M39.500 39H48.500M39 48V48.500" stroke="#ecb22e" /><path d="M29.500 39.500V48M19.500 39H20" stroke="#e01e5a" /></g><circle cx="56" cy="14" r="12.500" fill="#f8443f" /><circle cx="56" cy="15" r="2.500" fill="#fff" /></>, true],
  [<path d="M19.500 23C20 6 46 7 45.500 22C45 33 33.500 32 33.500 46.500M33.500 53V58.500" fill="none" stroke="#a3a3a3" strokeWidth="4.500" />, false],
  [<Adobe t="Ai" c="#ff8f1f" bg="#2e1703" />, true],
  [<Office t="W" c="#1b5cbe" kids={<><rect x="17" y="10" width="43" height="12.500" fill="#46a8ee" /><rect x="17" y="22" width="43" height="12" fill="#2c7dd3" /><rect x="17" y="34" width="43" height="13" fill="#1c5cbc" /><rect x="17" y="47" width="43" height="11" fill="#123f8c" /></>} />, false],
  [<Office t="X" c="#17804a" kids={<><rect x="17" y="10" width="43" height="48" fill="#1f9d60" /><rect x="38" y="10" width="22" height="12" fill="#3ac985" /><rect x="17" y="34" width="21" height="13" fill="#1b6e42" /><rect x="38" y="34" width="22" height="13" fill="#188048" /><rect x="17" y="47" width="43" height="11" fill="#1b5c38" /></>} />, false],
  [<Office t="P" c="#c43e22" kids={<><circle cx="35" cy="34" r="24" fill="#ee6c4b" /><path d="M35 10A24 24 0 0 1 59 34H35Z" fill="#ff9070" /><path d="M59 34A24 24 0 0 1 11 34Z" fill="#d35234" /></>} />, false],
  [<g transform="translate(1.500 0)"><defs><linearGradient id="ff" x1=".9" y1=".1" x2=".1" y2=".9"><stop stopColor="#ffe838" /><stop offset=".45" stopColor="#ff9a1c" /><stop offset=".75" stopColor="#ff3a48" /><stop offset="1" stopColor="#e31587" /></linearGradient></defs><circle cx="35" cy="32" r="22" fill="#2a62d8" /><path d="M11 8Q18 13 20 14Q28 10 34 12Q28 18 27 22L34 24Q34 30 26 32C20 44 34 50 42 45C52 38 48 24 42 16L44 3C52 8 54 14 57 19C70 42 56 63 34 63C14 63 2 46 6 26Q8 22 10 20Q9 14 11 8Z" fill="url(#ff)" /><path d="M44 3C52 12 60 18 60 32C60 46 50 46 46 50C54 36 36 26 44 3Z" fill="#ffe23a" /></g>, false],
  [<Chrome />, true],
  [<g transform="rotate(-6 34 34)"><rect x="12" y="8" width="44" height="53" fill="#fbfbf9" stroke="#b8ae7c" strokeWidth=".8" /><rect x="12" y="7" width="44" height="11" fill="#fbc92c" /><path d="M12 23H56M12 28H56M12 33H56M12 38H56M12 43H56M12 48H56M12 53H56" stroke="#dedede" strokeWidth="1" /></g>, false],
  [<><circle cx="34" cy="34" r="28" fill="#2fd566" /><g fill="none" stroke="#15190f" strokeLinecap="round"><path d="M17 25Q36 19 52 29" strokeWidth="5.500" /><path d="M18.500 34Q35 29 48 38" strokeWidth="4.700" /><path d="M20 42.500Q34 38 45 46" strokeWidth="3.700" /></g></>, false],
  [<><defs><linearGradient id="sp" x2="0" y2="1"><stop stopColor="#c8d4da" /><stop offset="1" stopColor="#83868a" /></linearGradient></defs><rect x="6.500" y="8" width="55" height="52" rx="2" fill="url(#sp)" /><circle cx="34" cy="34" r="22" fill="#2a2c2e" /><circle cx="34" cy="34" r="18.500" fill="none" stroke="#a4a6a8" strokeWidth="3" strokeDasharray="2.400 1.500" /><circle cx="34" cy="34" r="15" fill="#55585a" stroke="#c5c7c8" strokeWidth="3" /><path d="M34 34H49M34 34L26.500 21M34 34L26.500 47" stroke="#c5c7c8" strokeWidth="4" /><circle cx="34" cy="34" r="3" fill="#888" /><Badge x={56} t="1" /></>, false],
  [<><rect x="11" y="5" width="46" height="56" rx="8" fill="#3f79e4" /><path d="M11 42H57V53Q57 61 49 61H19Q11 61 11 53Z" fill="#2456b4" /><rect x="16" y="9" width="36" height="12" rx="3" fill="#1d3a6c" /><path d="M17 14H51V43H44Q41 43 41 46V47H27V46Q27 43 24 43H17Z" fill="#fdfdfe" /><path d="M27 46H41V55Q41 58 38 58H30Q27 58 27 55Z" fill="#9db9e6" /><path d="M27 29L32 35L45 21" fill="none" stroke="#2e3742" strokeWidth="4" /></>, false],
  [<g transform="translate(1.500 0)"><path d="M6 16L42 4L54 50L18 60Z" fill="#28b9ef" /><g transform="rotate(-8 34 34)"><rect x="14" y="8" width="40" height="52" rx="2" fill="#fbb83c" /><rect x="14" y="8" width="40" height="24" rx="2" fill="#fdd768" /><circle cx="34" cy="22" r="12" fill="none" stroke="#c98a2c" strokeWidth="2" /><path d="M27 20H41M34 20V32" stroke="#c98a2c" strokeWidth="2" /><path d="M19 56V46M24 56V41M29 56V50M34 56V46M39 56V40M44 56V38M49 56V42" stroke="#5a2412" strokeWidth="3" /></g></g>, false],
  [<><rect x="7" y="5" width="53" height="56" fill="#33281c" /><rect x="7" y="5" width="53" height="24" fill="#766449" /><rect x="19" y="11" width="29" height="19" fill="#4d918f" /><rect x="19" y="36" width="29" height="19" fill="#23485c" /><g fill="#d9d6cf"><path d="M11 9h4v5h-4zM11 20h4v5h-4zM11 30h4v5h-4zM11 41h4v5h-4zM11 52h4v5h-4zM52 9h4v5h-4zM52 20h4v5h-4z" /></g><circle cx="46" cy="46.500" r="15.500" fill="#54504e" stroke="#fff" strokeWidth="2" /><circle cx="46" cy="46.500" r="7" fill="#dc2a22" /></>, false],
  [<Adobe t="Pr" c="#ea8df7" bg="#2b0a38" />, false],
  [<Adobe t="Ps" c="#1fcdfc" bg="#03212d" />, false],
  [<Adobe t="Dw" c="#74f52a" bg="#132a0e" />, true],
  [<><path d="M6 11L52 3Q55 3 56 6L64 54Q64 57 61 58L16 64Q13 64 12 61L3 15Q3 12 6 11Z" fill="#4a494e" /><path d="M5 12L15 7L20 27L34 21L39 27L40 32Q50 35 61 30Q59 40 51 45Q52 56 46 59Q36 56 26 50Q20 46 20 40L13 48L4 30L10 27Z" fill="#f1f1f3" /><path d="M8 14L16 24L14 40L8 28Z" fill="#3b3a3f" /><path d="M22 28L33 24L29 32L36 36L30 42L22 38Z" fill="#3b3a3f" /><path d="M23 38.500L31 41.500" stroke="#d3303c" strokeWidth="4.500" /><path d="M33 43Q44 38 49 47" fill="none" stroke="#55545a" strokeWidth="1.500" /><circle cx="46" cy="52" r="4" fill="#777" /></>, false],
  [<><g fill="#1a7cb4"><circle cx="34" cy="34" r="26.500" /><circle cx="23" cy="20" r="15.500" /><circle cx="46" cy="48" r="15.500" /></g><g fill="#f7f8f8"><circle cx="34" cy="34" r="22.500" /><circle cx="23" cy="20" r="11.500" /><circle cx="46" cy="48" r="11.500" /></g><path d="M44.500 26C42 17 25 17 25 26C25 36 45 31 44.500 42C44 51 25 51 23.500 41" fill="none" stroke="#1a7cb4" strokeWidth="6.500" strokeLinecap="round" /></>, false],
  [<><rect x="2" y="2" width="64" height="64" fill="#fbf4ec" /><rect x="5" y="5" width="58" height="58" fill="#fbdcbf" /><path d="M5 46Q34 34 63 38V63H5Z" fill="#fdf3e8" /><path d="M22 12Q30 7 50 9V18Q40 17 38 20V28H48V35H38Q36 46 30 52L22 50Z" fill="#d87a26" /><path d="M22 12Q28 9 32 9V40Q30 50 22 50Z" fill="#b8601c" /><text x="36" y="62" fontFamily="Liberation Sans, sans-serif" fontSize="13" textLength="20" fill="#ee7c18">360</text><rect x="2" y="54" width="9" height="11" fill="#fff" /><path d="M3 64Q3 59 6 58L4 56H10V62L8 60Q6 61 5 64Z" fill="#222" /></>, false],
  [<><defs><linearGradient id="zo" x2="0" y2="1"><stop stopColor="#4c94fb" /><stop offset="1" stopColor="#2f6ff2" /></linearGradient></defs><rect x="6" y="5.500" width="56" height="56" rx="17" fill="url(#zo)" /><path d="M16 25Q16 24 18 24H36Q41 24 41 29V43H22Q16 43 16 37ZM43 31L51 25V43L43 37Z" fill="#fff" /></>, false],
  [<><rect x="5" y="4" width="58" height="56" fill="#2b0406" stroke="#f63a1e" strokeWidth="3" /><path d="M33 14C38 18 30 36 17 49C14 50 16 46 24 42C34 38 50 36 51 40C50 44 36 38 32 26C30 18 30 13 33 14Z" fill="none" stroke="#f6eeee" strokeWidth="2.200" /></>, true],
];
const DOCK_B: [React.ReactNode, boolean][] = [
  [<><rect x="14" y="9" width="46" height="34" fill="#a3834f" stroke="#eee" strokeWidth="1.500" /><g transform="rotate(-7 30 36)"><rect x="8" y="16" width="47" height="39" fill="#fff" /><rect x="10" y="18" width="43" height="17" fill="#7fb6ea" /><path d="M10 32H53V53H10Z" fill="#35608e" /><path d="M10 44Q24 36 30 44T53 46V53H10Z" fill="#e7eaec" /><path d="M10 48L22 42L26 53H10Z" fill="#5c4a3c" /></g><path d="M42 44H64L63 58Q54 63 45 58Z" fill="#8c8378" /><circle cx="53" cy="42" r="11" fill="#9db4c4" stroke="#55585c" strokeWidth="2.500" /><circle cx="53" cy="42" r="8" fill="none" stroke="#e4e8ea" strokeWidth="1.500" /></>, true],
  [<g transform="translate(1.500 0)"><defs><linearGradient id="qt" x2="0" y2="1"><stop stopColor="#75828f" /><stop offset="1" stopColor="#1f2123" /></linearGradient><linearGradient id="qb" x2="0" y2="1"><stop stopColor="#2152de" /><stop offset="1" stopColor="#26b8fb" /></linearGradient></defs><circle cx="34" cy="34" r="28" fill="url(#qt)" /><circle cx="34" cy="34" r="18" fill="url(#qb)" /><path d="M33 34L51 54" stroke="#2f3338" strokeWidth="11" strokeLinecap="round" /><path d="M46 48L56 54L61 54V61H52Z" fill="#2a2d31" /></g>, true],
  [<><path d="M6 17L10 61L60 53L58 44Z" fill="#4c5a5c" /><g transform="rotate(-7 34 34)"><rect x="11" y="11" width="46" height="46" fill="#fbfbfb" /><rect x="11" y="9" width="46" height="13" fill="#e94b46" /><text x="32" y="20" textAnchor="middle" fontFamily="Inter, sans-serif" fontSize="11" textLength="20" lengthAdjust="spacingAndGlyphs" fill="#fff">MAY</text><text x="34" y="50" textAnchor="middle" fontFamily="Inter, sans-serif" fontSize="30" fill="#262626">8</text></g><Badge x={56} t="5" /></>, true],
  [<><defs><linearGradient id="gh" x2="0" y2="1"><stop stopColor="#9a46b4" /><stop offset="1" stopColor="#46227a" /></linearGradient></defs><circle cx="34" cy="34" r="28.500" fill="url(#gh)" stroke="#f3f0f5" strokeWidth="2" /><path d="M19 17Q24 18 27 20Q34 18.500 41 20Q44 18 49 17Q51 22 50 25C56 34 50 45 41 45Q42 47 42 51V62H27V57C18 58 20 50 14 48Q18 45 22 50Q24 53 27 51Q27 47 28 45C18 44 13 34 18 25Q17 21 19 17Z" fill="#f3f0f5" /></>, true],
  [<><defs><linearGradient id="at" x2="0" y2="1"><stop stopColor="#96dc8c" /><stop offset="1" stopColor="#1fa37c" /></linearGradient></defs><circle cx="34" cy="34" r="26.500" fill="url(#at)" stroke="#e7efe9" strokeWidth="2" /><g fill="none" stroke="#eef6f0" strokeWidth="1.800"><ellipse cx="34" cy="34" rx="18" ry="6.500" /><ellipse cx="34" cy="34" rx="18" ry="6.500" transform="rotate(58 34 34)" /><ellipse cx="34" cy="34" rx="18" ry="6.500" transform="rotate(118 34 34)" /></g><circle cx="34" cy="34" r="2.500" fill="#eef6f0" /></>, true],
];
const DOCK_C: [React.ReactNode, boolean][] = [
  [<><rect x="21" y="4" width="26" height="12" fill="#376274" stroke="#eef" strokeWidth="1.500" /><path d="M8 10.500H45L60 24V63H8Z" fill="#f4f6f7" /><path d="M8 51H60M8 56H60M8 16H44M8 21H50M14 11V26M20 11V26M26 11V26M32 11V26M14 50V63M20 50V63M26 50V63M32 50V63M38 50V63M44 50V63M50 50V63" stroke="#cfdfe8" strokeWidth=".8" /><path d="M45 10.500V24H60Z" fill="#d8dadb" /><path d="M14 32h4v12h-4zM19 27h3v17h-3zM23 27h3v17h-3zM28 32h4v12h-4zM33 27h3v17h-3zM38 32h3v12h-3zM42 27h3v17h-3zM47 27h3v17h-3zM51 32h3v12h-3z" fill="none" stroke="#777" strokeWidth=".9" /></>, false],
  [<Win kids={<><rect x="4" y="19" width="60" height="30" fill="#eeeeee" /><rect x="4" y="19" width="60" height="5" fill="#28323c" /><rect x="4" y="47" width="60" height="2" fill="#333" /><rect x="21" y="24" width="25" height="23" fill="#fff" /><path d="M24 40H43M24 43H40M50 28H54M50 33H54" stroke="#aaa" strokeWidth="1" /><circle cx="30" cy="32" r="2.500" fill="#d79a62" /></>} />, false],
  [<Win kids={<><rect x="4" y="18" width="60" height="32" fill="#0a0c10" /><rect x="15" y="20" width="38" height="20" fill="#7597b5" /><ellipse cx="36" cy="31" rx="14" ry="7" fill="#a6bccd" /><rect x="15" y="39" width="38" height="11" fill="#414a3a" /></>} />, false],
  [<Win kids={<><rect x="4" y="18" width="60" height="32" fill="#fdfdfd" /><rect x="4" y="18" width="60" height="4" fill="#2a2f35" /><path d="M6 25H12M6 28H14M6 37H60M6 39H58" stroke="#bbb" strokeWidth="1" /><path d="M5 34H9M5 42H8M5 45H8" stroke="#99e" strokeWidth="1" /></>} />, false],
  [<><defs><linearGradient id="tr"><stop stopColor="#4c4e4f" /><stop offset=".5" stopColor="#77797a" /><stop offset="1" stopColor="#3f4142" /></linearGradient></defs><path d="M12 10L22 5L30 8L38 4L48 6L56 10V17H12Z" fill="#e6e6e4" /><path d="M16 12l6-4 3 5zM34 8l5 6 4-5zM46 10l4 5 2-5zM26 12l5 1-1-5z" fill="#555" /><path d="M27 11l3 2-1 2-4-1z" fill="#3bbcd2" /><path d="M39 10l4 1-2 3z" fill="#c6602f" /><path d="M11 10Q11 16 34 16Q57 16 57 10L52 56Q50 62 34 62Q18 62 16 56Z" fill="url(#tr)" /><path d="M18 22L22 56M50 22L46 56M20 20Q34 26 50 19" stroke="#8b8d8e" strokeWidth="1" fill="none" opacity=".7" /></>, false],
];

function Slots({ items, light, w }: { items: [React.ReactNode, boolean][]; light?: boolean; w: string }) {
  return (
    <>
      {items.map(([icon, on], i) => (
        <div key={i} className={"flex shrink-0 flex-col items-center " + w}>
          <svg className="h-[68px] w-[68px] overflow-visible" viewBox="0 0 68 68">{icon}</svg>
          {on && <div className={"h-[8px] w-[8px] rounded-full " + (light || i > 15 ? "bg-white" : "bg-[#c4c4c4]")} />}
        </div>
      ))}
    </>
  );
}
function Dock() {
  return (
    <div className="absolute left-[49px] top-[1513px] flex h-[96px] w-[2462px] rounded-[12px] border border-[#2a2a2a]/70 bg-[#bfbfbf] shadow-[0_0_50px_rgba(0,0,0,0.16)]">
      <div className="flex h-full w-full rounded-[11px] border-2 border-white/15 bg-[linear-gradient(90deg,#444_0,#484848_740px,#585858_785px,#808080_835px,#a4a4a5_880px,#b8b8ba_940px,#bdbdbd_1200px,#b6b6b9_1400px,#bfbfbf_1800px,#c0c0c0_100%)] bg-origin-border pl-[4px] pt-[4px]">
        <Slots items={DOCK_A} w="w-[68.170px]" />
        <div className="ml-[15px] mr-[14px] mt-[16px] h-[42px] w-[2px] shrink-0 bg-white/90" />
        <Slots items={DOCK_B} w="w-[68.250px]" light />
        <div className="ml-[15px] mr-[14px] mt-[6px] h-[62px] w-[2px] shrink-0 bg-white/90" />
        <Slots items={DOCK_C} w="w-[68.400px]" />
      </div>
    </div>
  );
}

export default function App() {
  return (
    <div className="relative flex h-[1600px] w-[2560px] flex-col overflow-hidden bg-[#303030] font-['Noto_Sans',sans-serif]">
      <MenuBar />
      <div className="mt-[2px]" />
      <TitleBar />
      <div className="h-[2px] shrink-0" />
      <ControlBar />
      <div className="h-[2px] shrink-0" />
      <div className="flex min-h-0">
        <ToolPanel />
        <div className="flex w-[2412px] flex-col">
          <Tabs />
          <div className="h-[2px] shrink-0" />
          <Artboard />
        </div>
      </div>
      <Dock />
    </div>
  );
}
